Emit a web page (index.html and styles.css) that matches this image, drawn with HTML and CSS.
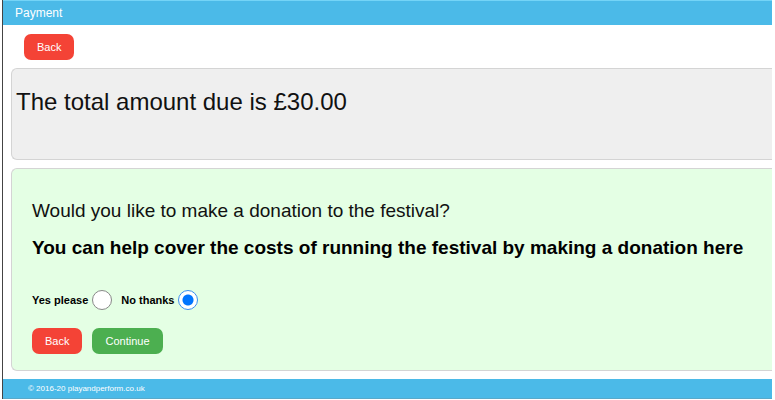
FILE: index.html
```
<!DOCTYPE html>
<html lang="en">
<head>
  <meta charset="UTF-8" />
  <title>Payment</title>
  <link rel="stylesheet" href="styles.css">
</head>
<body>
  <div class="page">
    <header class="topbar">Payment</header>

    <div class="toolbar">
      <button type="button" class="btn danger">Back</button>
    </div>

    <section class="panel total">
      <p>The total amount due is £30.00</p>
    </section>

    <!-- donation -->
    <form class="panel donation">
      <p class="question">Would you like to make a donation to the festival?</p>
      <p class="help">You can help cover the costs of running the festival by making a donation here</p>

      <div class="choices">
        <label for="donateYes">Yes please</label>
        <input type="radio" id="donateYes" name="donate" value="yes" />
        <label for="donateNo">No thanks</label>
        <input type="radio" id="donateNo" name="donate" value="no" checked />
      </div>

      <div class="actions">
        <button type="button" class="btn danger">Back</button>
        <button type="button" class="btn success">Continue</button>
      </div>
    </form>

    <footer class="footer">© 2016-20 playandperform.co.uk</footer>
  </div>
</body>
</html>
```

FILE: styles.css
```
* {
  box-sizing: border-box;
}
body {
  margin: 0 3px 0 2px;
  font-family: Arial, "Liberation Sans", sans-serif;
  color: #111;
  background: #fff;
}
p {
  margin: 0;
}
.page {
  border-left: 1px solid #444;
}
.topbar {
  padding: 5px 12px 4px;
  border-top: 1px solid #74d4f7;
  font-size: 12px;
  line-height: 15px;
  color: #fff;
  background: #4bbae8;
}
.toolbar {
  padding: 9px 21px 8px;
}
.btn {
  display: block;
  height: 26px;
  padding: 0 13px;
  border: none;
  border-radius: 7px;
  font-family: inherit;
  font-size: 11px;
  color: #fff;
  cursor: pointer;
}
.danger {
  background: #f44336;
}
.success {
  background: #4caf50;
}
.panel {
  margin: 0 0 8px 8px;
  border: 1px solid #d4d4d4;
  border-right: none;
  border-radius: 6px 0 0 6px;
}
.total {
  padding: 19px 4px 43px;
  font-size: 24px;
  line-height: 28px;
  background: #efefef;
}
.donation {
  padding: 30px 20px 16px;
  background: #e4ffe4;
}
.question {
  font-size: 19px;
  line-height: 24px;
}
.help {
  margin-top: 13px;
  font-size: 19px;
  font-weight: bold;
  line-height: 24px;
  color: #000;
}
.choices {
  display: flex;
  align-items: center;
  margin-top: 30px;
  font-size: 11px;
  font-weight: bold;
  color: #000;
}
.choices input {
  appearance: none;
  width: 20px;
  height: 20px;
  margin: 0 9px 0 4px;
  border: 1px solid #888;
  border-radius: 50%;
  background: #fff;
}
.choices input:checked {
  border-color: #3b8fee;
  background: radial-gradient(circle, #0075ff 5px, #fff 6px);
}
.actions {
  display: flex;
  gap: 10px;
  margin-top: 18px;
}
.footer {
  padding: 3px 25px 2px;
  border-bottom: 1px solid #58a9ca;
  font-size: 8px;
  line-height: 14px;
  color: #fff;
  background: #4bbae8;
}
```
